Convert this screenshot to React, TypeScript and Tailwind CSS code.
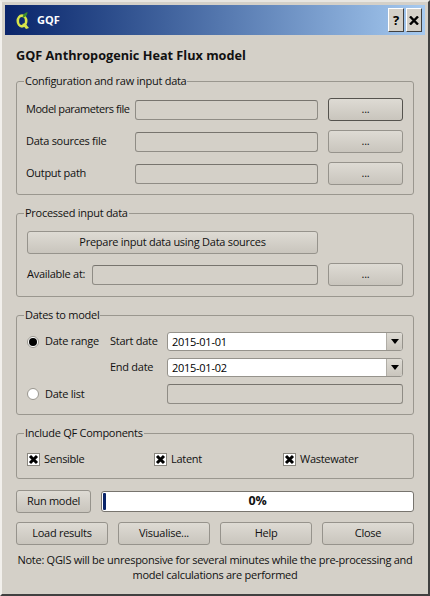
import React from 'react';

const btnBase = 'flex items-center justify-center h-[23px] rounded-[3px] border bg-gradient-to-b from-[#dedbd4] to-[#c9c5bd] text-[#111]';
const btn = `${btnBase} border-[#96938c]`;
const field = 'h-[20px] rounded-[3px] border border-[#8f8c85] border-t-[#77746e] bg-[#d4d0c8]';
const capBtn = 'w-[16px] h-[24px] flex items-center justify-center bg-[#d4d0c8] border border-t-white border-l-white border-r-[#404040] border-b-[#404040] text-black';

function QLogo() {
  return (
    <svg width="16" height="20" viewBox="0 0 16 20" className="shrink-0">
      <ellipse cx="7" cy="11" rx="4.2" ry="5.4" fill="none" stroke="#d9e64a" strokeWidth="2.6" />
      <path d="M7 14 L11 19 L14 18 L10 13 Z" fill="#d9e64a" />
      <path d="M7.5 8 C7.5 5 9 3 12.5 2 C12.5 5 11 7 7.5 8 Z" fill="#3f8f2a" />
    </svg>
  );
}

function Group({ title, className, children }: { title: string; className?: string; children: React.ReactNode }) {
  return (
    <fieldset className={`border border-[#9a978f] rounded-[3px] px-[10px] ${className ?? ''}`}>
      <legend className="px-[1px] ml-[-3px] leading-[14px]">{title}</legend>
      {children}
    </fieldset>
  );
}

function FileRow({ label, focused, labelClass }: { label: string; focused?: boolean; labelClass: string }) {
  return (
    <div className="flex items-center h-[23px]">
      <span className={`${labelClass} whitespace-nowrap`}>{label}</span>
      <div className={`${field} flex-1`} />
      <button className={`${btnBase} w-[75px] ml-[10px] ${focused ? 'border-[#55534e]' : 'border-[#96938c]'}`}>...</button>
    </div>
  );
}

function Check({ label, className }: { label: string; className?: string }) {
  return (
    <label className={`flex items-center gap-[4px] ${className ?? ''}`}>
      <span className="w-[13px] h-[13px] flex items-center justify-center bg-white border border-[#8a877f]">
        <svg width="11" height="11" viewBox="0 0 11 11">
          <path d="M2 2 L9 9 M9 2 L2 9" stroke="#000" strokeWidth="3" />
        </svg>
      </span>
      {label}
    </label>
  );
}

function Radio({ checked }: { checked?: boolean }) {
  return (
    <span className="w-[12px] h-[12px] rounded-full bg-white border border-[#9a978f] flex items-center justify-center shrink-0">
      {checked && <span className="w-[8px] h-[8px] rounded-full bg-black" />}
    </span>
  );
}

function Combo({ value }: { value: string }) {
  return (
    <div className="flex-1 flex h-[19px] rounded-[3px] border border-[#96938c] bg-white overflow-hidden">
      <span className="flex-1 pl-[4px] leading-[17px] text-black">{value}</span>
      <span className="w-[16px] flex items-center justify-center border-l border-[#b0ada6] bg-gradient-to-b from-[#dedbd4] to-[#c9c5bd]">
        <svg width="8" height="5" viewBox="0 0 8 5">
          <path d="M0 0 H8 L4 5 Z" fill="#000" />
        </svg>
      </span>
    </div>
  );
}

export default function App() {
  return (
    <div className="w-[430px] h-[596px] bg-[#d4d0c8] border-t-2 border-t-[#e8e6e1] border-l-2 border-l-[#f2f0ec] border-r-2 border-r-[#404040] border-b-2 border-b-[#404040] text-[11px] text-[#111] overflow-hidden" style={{ fontFamily: '"Open Sans", sans-serif' }}>
      {/* title bar */}
      <div className="mx-[3px] mt-[3px] h-[30px] flex items-center pl-[10px] pr-[3px] bg-gradient-to-r from-[#0a246a] to-[#a6caf0]">
        <QLogo />
        <span className="ml-[6px] font-bold text-[11px] text-white">GQF</span>
        <div className="ml-auto flex gap-[2px]">
          <button className={`${capBtn} font-bold text-[13px] leading-none`}>?</button>
          <button className={capBtn}>
            <svg width="10" height="9" viewBox="0 0 10 9">
              <path d="M1 0.5 L9 8.5 M9 0.5 L1 8.5" stroke="#000" strokeWidth="2.4" />
            </svg>
          </button>
        </div>
      </div>

      <div className="px-[14px] tracking-[-0.27px]">
        <h1 className="mt-[12px] h-[16px] font-bold text-[12.7px] leading-[16px] tracking-normal">GQF Anthropogenic Heat Flux model</h1>

        <Group title="Configuration and raw input data" className="mt-[11px] h-[121px]">
          <div className="mt-[10px] flex flex-col gap-[9px]">
            <FileRow label="Model parameters file" focused labelClass="w-[108px] ml-[-1px] mr-[1px] tracking-[-0.45px]" />
            <FileRow label="Data sources file" labelClass="w-[108px] ml-[-1px] mr-[1px]" />
            <FileRow label="Output path" labelClass="w-[108px] ml-[-1px] mr-[1px]" />
          </div>
        </Group>

        <Group title="Processed input data" className="mt-[11px] h-[91px]">
          <button className={`${btn} w-[291px] mt-[11px]`}>Prepare input data using Data sources</button>
          <div className="mt-[9px]">
            <FileRow label="Available at:" labelClass="w-[65px]" />
          </div>
        </Group>

        <Group title="Dates to model" className="mt-[11px] h-[107px]">
          <div className="mt-[10px] flex items-center h-[19px]">
            <Radio checked />
            <span className="ml-[6px] w-[65px]">Date range</span>
            <span className="w-[57px]">Start date</span>
            <Combo value="2015-01-01" />
          </div>
          <div className="mt-[7px] flex items-center h-[19px]">
            <span className="ml-[83px] w-[57px]">End date</span>
            <Combo value="2015-01-02" />
          </div>
          <div className="mt-[7px] flex items-center h-[20px]">
            <Radio />
            <span className="ml-[6px] w-[122px]">Date list</span>
            <div className={`${field} flex-1`} />
          </div>
        </Group>

        <Group title="Include QF Components" className="mt-[11px] h-[53px]">
          <div className="mt-[12px] flex items-center h-[14px]">
            <Check label="Sensible" className="w-[127px]" />
            <Check label="Latent" className="w-[129px]" />
            <Check label="Wastewater" />
          </div>
        </Group>

        <div className="mt-[11px] flex items-center gap-[10px]">
          <button className={`${btn} w-[75px]`}>Run model</button>
          <div className="relative flex-1 h-[21px] rounded-[3px] border border-[#77746e] bg-white flex items-center justify-center font-bold text-[12.5px]">
            <span className="absolute left-[1px] top-[1px] bottom-[1px] w-[3px] bg-[#0a246a] rounded-[1px]" />
            0%
          </div>
        </div>

        <div className="mt-[9px] grid grid-cols-4 gap-[10px]">
          <button className={btn}>Load results</button>
          <button className={btn}>Visualise...</button>
          <button className={btn}>Help</button>
          <button className={btn}>Close</button>
        </div>

        <p className="mt-[7px] text-center leading-[15px] whitespace-nowrap">
          Note: QGIS will be unresponsive for several minutes while the pre-processing and<br />
          model calculations are performed
        </p>
      </div>
    </div>
  );
}
